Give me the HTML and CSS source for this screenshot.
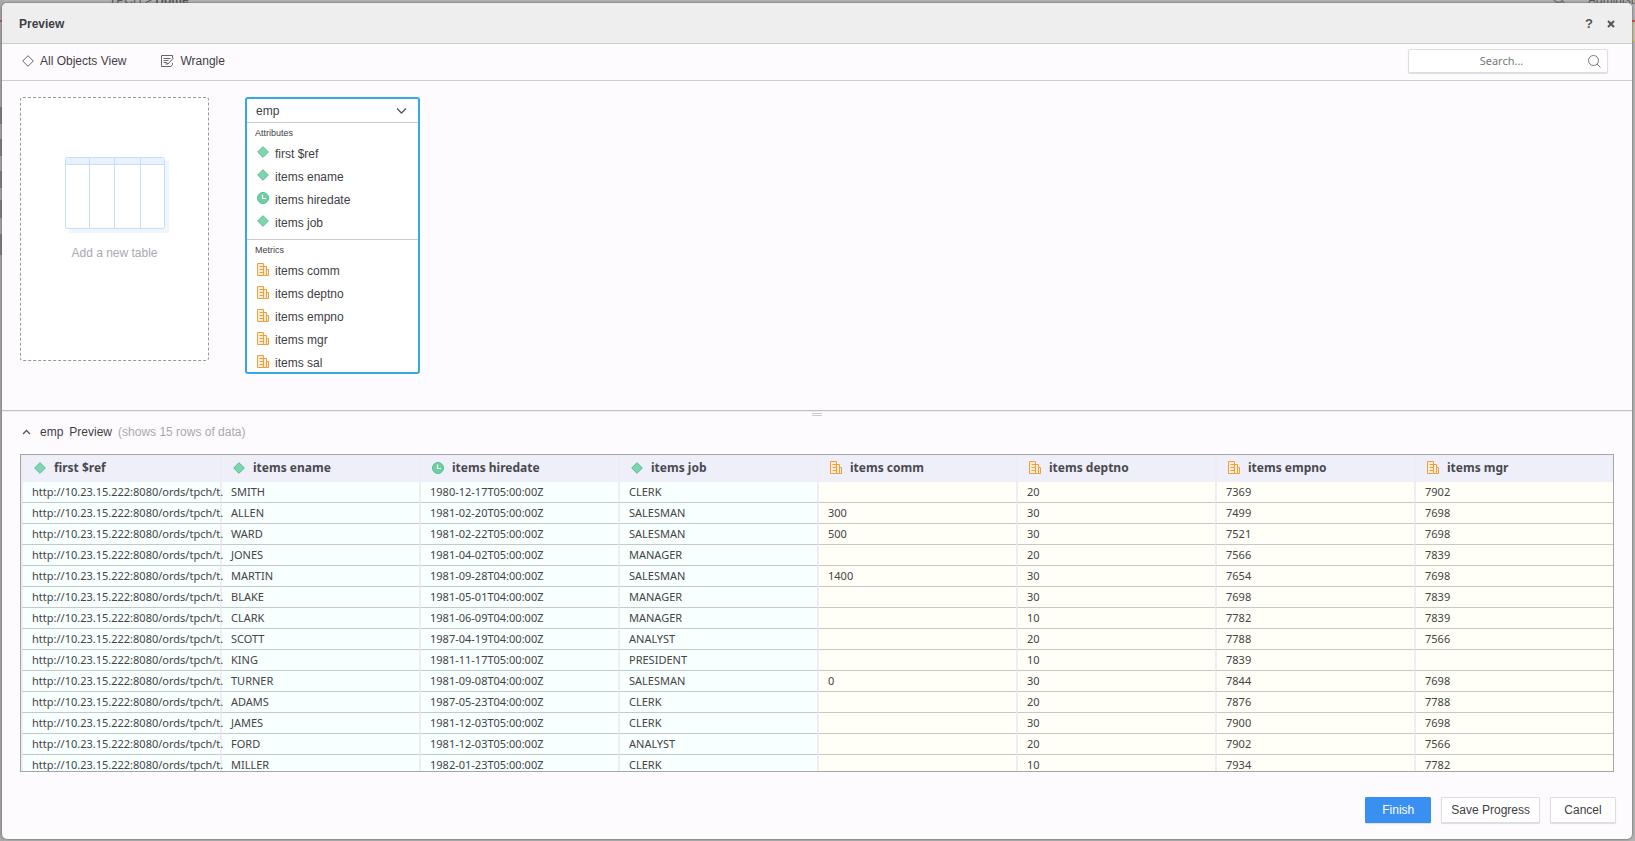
FILE: index.html
```
<!DOCTYPE html>
<html lang="en">
<head>
<meta charset="utf-8">
<title>Preview</title>
<link rel="stylesheet" href="styles.css">
</head>
<body>
<svg width="0" height="0" class="sprites" aria-hidden="true">
  <symbol id="attr" viewBox="0 0 12 12"><path d="M6 .7 11.3 6 6 11.3.7 6Z" fill="#80d4ae" stroke="#4fbd90"/></symbol>
  <symbol id="time" viewBox="0 0 12 12"><circle cx="6" cy="6" r="5.5" fill="#6fcfa2" stroke="#55c090"/><path d="M5.500 2.500v4h3.500" fill="none" stroke="#fff" stroke-width="1.200"/></symbol>
  <symbol id="metric" viewBox="0 0 12 13"><path d="M.5.500h6v12h-6zM6.500 3.500h3v9h-3zM9.500 6.500h2v6h-2z" fill="#fbeed8" stroke="#ee9f3c"/><path d="M2.500 3.500h4M2.500 6.500h4M2.500 9.500h4" stroke="#ee9f3c"/></symbol>
</svg>
<div class="backdrop" aria-hidden="true">
  <div class="crumbs">TPCH &gt; <b>Home</b></div>
  <div class="account"><svg width="16" height="16" viewBox="0 0 16 16"><circle cx="6.500" cy="5.500" r="5" fill="none" stroke="#777" stroke-width="1.500"/><path d="m10 9 4 4" stroke="#777" stroke-width="1.500"/></svg>Administra</div>
</div>
<main class="dialog">
  <header class="titlebar">
    <h1>Preview</h1>
    <button class="glyph" aria-label="Help">?</button>
    <button class="glyph" aria-label="Close"><svg width="8" height="8" viewBox="0 0 8 8"><path d="m1 1 6 6M7 1 1 7" stroke="#555" stroke-width="2"/></svg></button>
  </header>
  <div class="toolbar">
    <button class="tool"><svg width="12" height="12" viewBox="0 0 12 12"><path d="M6 .7 11.300 6 6 11.300.7 6Z" fill="none" stroke="#666"/></svg>All Objects View</button>
    <button class="tool"><svg width="13" height="13" viewBox="0 0 13 13" fill="none" stroke="#666"><path d="M11.500 3V.5H.5v11h9.500l1.500-2V8M2.500 3.500h7M2.500 5.500h5M2.500 7.500h3M12.500 3 7 9l-2-2M7 9H4.500"/></svg>Wrangle</button>
    <label class="search"><input type="text" placeholder="Search..." aria-label="Search"><svg width="13" height="13" viewBox="0 0 13 13" fill="none" stroke="#777"><circle cx="5.500" cy="5.500" r="5"/><path d="m9 9 3.500 3.500"/></svg></label>
  </div>
  <section class="canvas">
    <button class="newtable">
      <svg width="104" height="76" viewBox="0 0 104 76"><rect x="4" y="4" width="100" height="72" fill="#edf6fe"/><rect x=".5" y=".5" width="99" height="71" rx="2" fill="#fff" stroke="#cbdcf5"/><path d="M1 1h98v6H1z" fill="#e6f2fe"/><path d="M1 7.500h98M24.500 1v70M49.500 1v70M75.500 1v70" stroke="#cbdcf5"/></svg>
      <span>Add a new table</span>
    </button>
    <article class="card">
      <button class="cardhead">emp<svg width="11" height="8" viewBox="0 0 11 8"><path d="m1 1.500 4.500 4.500L10 1.500" fill="none" stroke="#555" stroke-width="1.300"/></svg></button>
      <h2>Attributes</h2>
      <ul>
        <li><svg class="ico"><use href="#attr"/></svg>first $ref</li>
        <li><svg class="ico"><use href="#attr"/></svg>items ename</li>
        <li><svg class="ico"><use href="#time"/></svg>items hiredate</li>
        <li><svg class="ico"><use href="#attr"/></svg>items job</li>
      </ul>
      <h2 class="ruled">Metrics</h2>
      <ul>
        <li><svg class="ico tall"><use href="#metric"/></svg>items comm</li>
        <li><svg class="ico tall"><use href="#metric"/></svg>items deptno</li>
        <li><svg class="ico tall"><use href="#metric"/></svg>items empno</li>
        <li><svg class="ico tall"><use href="#metric"/></svg>items mgr</li>
        <li><svg class="ico tall"><use href="#metric"/></svg>items sal</li>
      </ul>
    </article>
  </section>
  <div class="splitter"><i></i></div>
  <section class="preview">
    <button class="previewhead"><svg width="9" height="6" viewBox="0 0 9 6"><path d="m1 5 3.500-3.500L8 5" fill="none" stroke="#555" stroke-width="1.300"/></svg><span>emp</span><span>Preview</span><small>(shows 15 rows of data)</small></button>
    <div class="gridbox">
      <table>
        <thead><tr id="heads"></tr></thead>
        <tbody id="rows"></tbody>
      </table>
    </div>
  </section>
  <footer>
    <button class="btn primary">Finish</button>
    <button class="btn">Save Progress</button>
    <button class="btn">Cancel</button>
  </footer>
</main>
<script src="script.js"></script>
</body>
</html>
```
FILE: script.js
```
const heads = [
  ['attr', 'first $ref'], ['attr', 'items ename'], ['time', 'items hiredate'], ['attr', 'items job'],
  ['metric', 'items comm'], ['metric', 'items deptno'], ['metric', 'items empno'], ['metric', 'items mgr']
];
const rows = [
  'SMITH|1980-12-17T05:00:00Z|CLERK||20|7369|7902',
  'ALLEN|1981-02-20T05:00:00Z|SALESMAN|300|30|7499|7698',
  'WARD|1981-02-22T05:00:00Z|SALESMAN|500|30|7521|7698',
  'JONES|1981-04-02T05:00:00Z|MANAGER||20|7566|7839',
  'MARTIN|1981-09-28T04:00:00Z|SALESMAN|1400|30|7654|7698',
  'BLAKE|1981-05-01T04:00:00Z|MANAGER||30|7698|7839',
  'CLARK|1981-06-09T04:00:00Z|MANAGER||10|7782|7839',
  'SCOTT|1987-04-19T04:00:00Z|ANALYST||20|7788|7566',
  'KING|1981-11-17T05:00:00Z|PRESIDENT||10|7839|',
  'TURNER|1981-09-08T04:00:00Z|SALESMAN|0|30|7844|7698',
  'ADAMS|1987-05-23T04:00:00Z|CLERK||20|7876|7788',
  'JAMES|1981-12-03T05:00:00Z|CLERK||30|7900|7698',
  'FORD|1981-12-03T05:00:00Z|ANALYST||20|7902|7566',
  'MILLER|1982-01-23T05:00:00Z|CLERK||10|7934|7782'
];
document.getElementById('heads').innerHTML = heads.map(([icon, name]) =>
  `<th scope="col"><span><svg class="ico ${icon === 'metric' ? 'tall' : ''}"><use href="#${icon}"/></svg>${name}</span></th>`).join('');
document.getElementById('rows').innerHTML = rows.map(r =>
  '<tr>' + ['http://10.23.15.222:8080/ords/tpch/t.', ...r.split('|')].map((v, i) =>
    `<td class="${i > 3 ? 'num' : ''}">${v}</td>`).join('') + '</tr>').join('');
```
FILE: styles.css
```
* { box-sizing: border-box; }
body { margin: 0; height: 100vh; padding: 3px 3px 2px 2px; background: #b4b4b4; color: #3f4045; font: 12px/16px "Liberation Sans", Arial, sans-serif; overflow: hidden; }
button, input { font: inherit; color: inherit; }
button { background: none; border: 0; padding: 0; cursor: pointer; }
ul { list-style: none; margin: 0; padding: 0; }
.sprites { position: absolute; }
.backdrop {
  position: absolute; inset: 0; z-index: -1; display: flex; justify-content: space-between; color: #555; overflow: hidden;
  background:
    linear-gradient(#a9a9a9 0 20px, #c05050 20px 22px, #a9a9a9 22px 107px, #7d7d7b 107px 124px, #a9a9a9 124px 139px, #7d7d7b 139px 156px, #a9a9a9 156px 171px, #7d7d7b 171px 188px, #a9a9a9 188px 200px, #7d7d7b 200px 218px, #a9a9a9 218px 234px, #7d7d7b 234px 255px, #a9a9a9 255px) left / 4px 100% no-repeat,
    linear-gradient(#b4b4b4 0 20px, #d05050 20px 22px, #c9c2ac 22px 41px, #cdb94e 41px 42px, #b4b4b4 42px) right / 4px 100% no-repeat,
    #b4b4b4;
}
.crumbs { margin: -8px 0 0 109px; }
.account { margin-top: -8px; width: 83px; display: flex; gap: 20px; white-space: nowrap; }
.account svg { flex: none; }
.dialog { height: 100%; display: flex; flex-direction: column; background: #fefbff; border-radius: 5px; overflow: hidden; box-shadow: 0 0 3px #555; }
.titlebar { height: 41px; flex: none; display: flex; align-items: center; background: #eee; border-bottom: 1px solid #ccc; padding: 1px 17px 0 17px; }
h1 { margin: 0 auto 0 0; font-size: 12px; }
.glyph { font-weight: bold; font-size: 13px; color: #555; margin-left: 14px; }
.toolbar { height: 37px; flex: none; display: flex; align-items: center; border-bottom: 1px solid #ccc; padding: 0 24px 2px 20px; }
.tool { display: flex; align-items: center; gap: 6px; margin-right: 35px; }
.search { margin-left: auto; width: 200px; height: 24px; display: flex; align-items: center; padding-right: 6px; background: #fff; border: 1px solid #ddd; border-radius: 2px; box-shadow: 0 1px 1px #ddd; }
.search input { flex: 1; min-width: 0; border: 0; outline: 0; background: none; text-align: center; font: 11px/16px "Noto Sans", sans-serif; padding: 0 0 0 6px; }
.search input::placeholder { color: #777; }
.canvas { flex: none; height: 329px; display: flex; align-items: flex-start; gap: 36px; padding: 16px 18px; }
.newtable { width: 189px; height: 264px; flex: none; display: flex; flex-direction: column; align-items: center; gap: 12px; padding-top: 59px; background: #fff; border: 1px dashed #999; border-radius: 3px; color: #aaa9b0; }
.newtable svg { flex: none; margin-left: 4px; }
.card { width: 175px; height: 277px; background: #fff; border: 2px solid #34a8e8; border-radius: 3px; overflow: hidden; }
.cardhead { width: 100%; height: 24px; display: flex; justify-content: space-between; align-items: center; padding: 0 11px 0 9px; border-bottom: 1px solid #ccc; }
.card h2 { margin: 0; padding: 3px 8px 2px; font-weight: normal; font-size: 9px; line-height: 14px; }
.card h2.ruled { border-top: 1px solid #ccc; margin-top: 5px; }
.card li { height: 23px; display: flex; align-items: center; gap: 6px; padding-left: 10px; }
.card .ico { margin-bottom: 3px; }
.ico { width: 12px; height: 12px; flex: none; }
.ico.tall { height: 13px; }
.splitter { flex: none; height: 6px; border-top: 1px solid #bfc0c8; box-shadow: inset 0 1px #ececf4; display: flex; justify-content: center; align-items: flex-end; }
.splitter i { width: 10px; height: 3px; border: solid #ccc; border-width: 1px 0; }
.preview { flex: 1; min-height: 0; padding: 0 18px; display: flex; flex-direction: column; }
.previewhead { display: flex; align-items: center; height: 32px; flex: none; padding: 0 2px; margin: 0 0 6px; }
.previewhead span { margin-right: 6px; }
.previewhead svg { margin-right: 9px; }
.previewhead small { font-size: 12px; color: #aaa8ad; }
.gridbox { flex: 1; min-height: 0; overflow: hidden; border: 1px solid #a5a4a8; }
table { width: 100%; table-layout: fixed; border-collapse: separate; border-spacing: 0; font: 11px/16px "Noto Sans", sans-serif; color: #444; }
th, td { border-left: 2px solid #f0edf2; white-space: nowrap; text-align: left; }
th { height: 27px; padding: 0 0 2px 11px; background: #eeeff8; font-size: 12px; color: #4a4a4e; }
th span { display: flex; align-items: center; gap: 8px; }
td { height: 21px; padding: 0 0 0 9px; background: #f8ffff; border-bottom: 1px solid #c8c8c8; }
td.num { background: #fffff7; }
footer { flex: none; display: flex; justify-content: flex-end; gap: 10px; padding: 25px 16px 16px; }
.btn { height: 26px; min-width: 66px; padding: 0 9px; background: #fff; border: 1px solid #ddd; border-radius: 1px; box-shadow: 0 1px 1px #ddd; }
.btn.primary { background: #3990f0; border-color: #3990f0; color: #fff; }
```
